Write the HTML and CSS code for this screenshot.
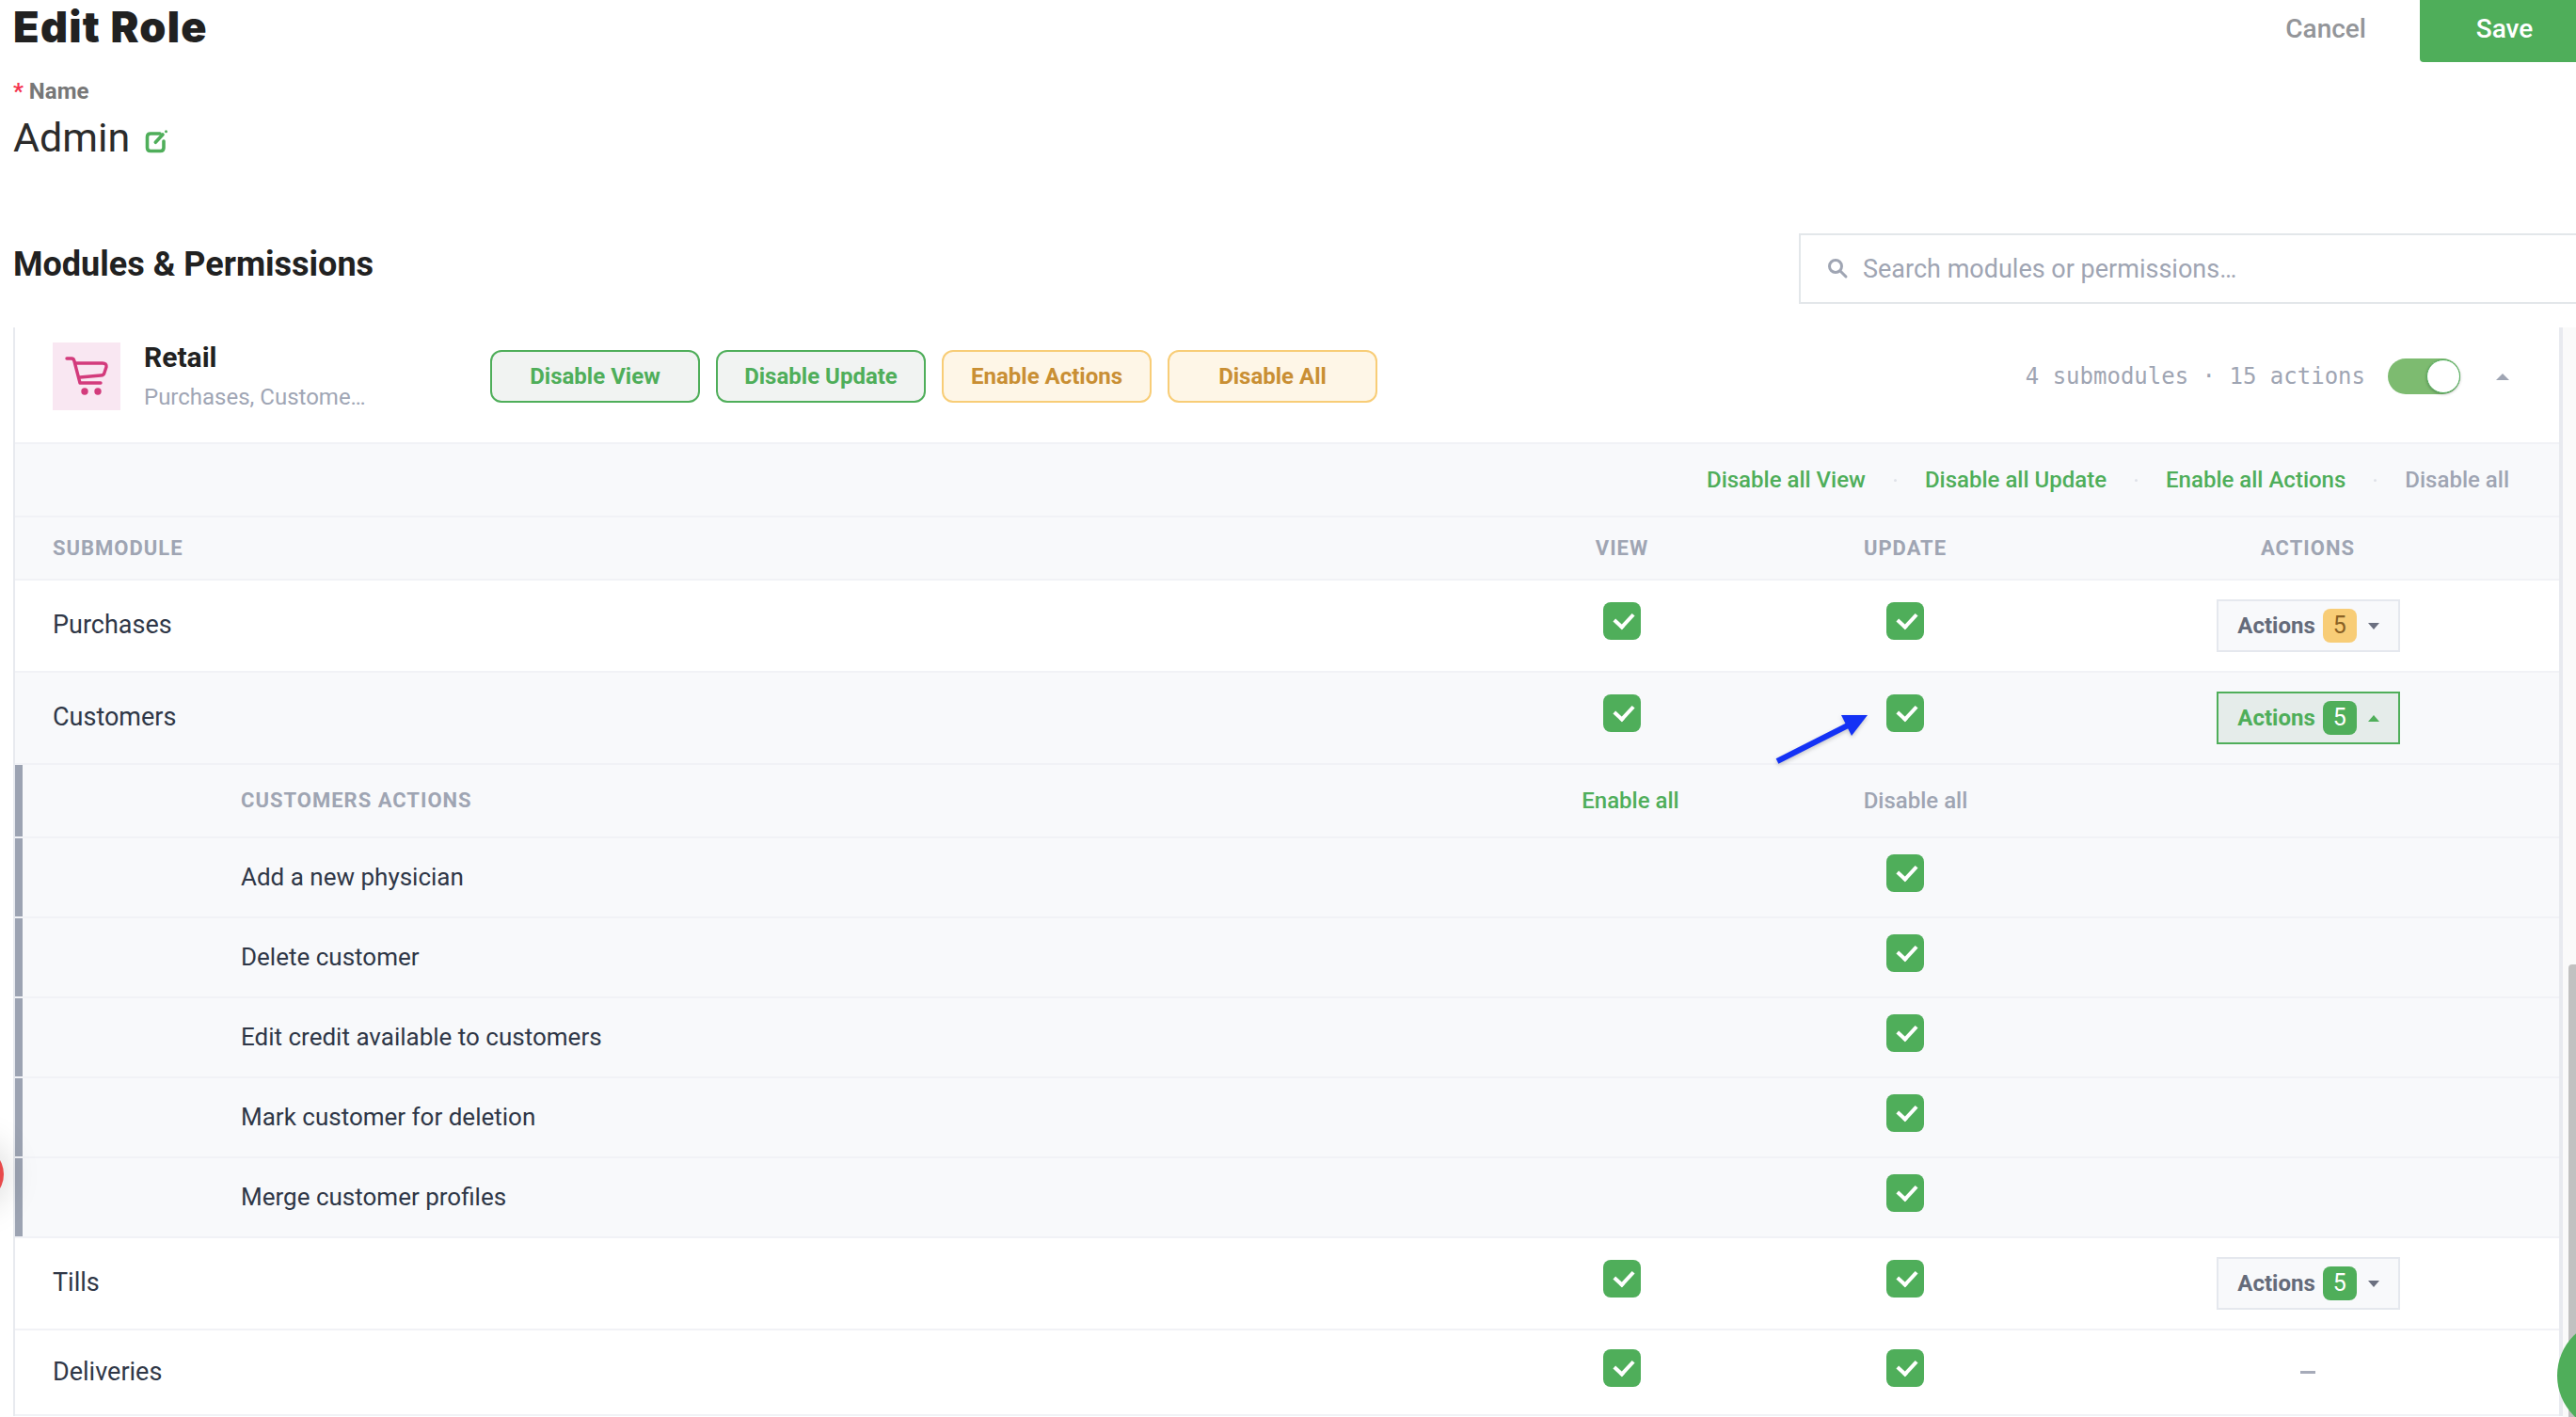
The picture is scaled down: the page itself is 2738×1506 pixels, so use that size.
FILE: index.html
```html
<!DOCTYPE html>
<html lang="en">
<head>
    <meta charset="UTF-8">
    <meta name="viewport" content="width=device-width, initial-scale=1.0">
    <title>Edit Role</title>
    <link rel="stylesheet" href="styles.css">
</head>
<body>
    <div class="topbar">
        <h1>Edit Role</h1>
        <div class="topbar-actions">
            <a href="#" class="cancel-link">Cancel</a>
            <button class="save-btn">Save</button>
        </div>
    </div>

    <div class="name-field">
        <div class="field-label"><span class="required">*</span> Name</div>
        <div class="field-value">
            Admin
            <svg class="edit-icon" viewBox="0 0 26 26" width="26" height="26" fill="none" stroke="#4fae5a" stroke-width="3.600" stroke-linecap="round">
                <path d="M16 5H6Q2.500 5 2.500 8.500V20Q2.500 23.500 6 23.500H16.500Q20 23.500 20 20V13"/>
                <path d="M11.300 14.300L19 6"/>
                <circle cx="22.500" cy="2.700" r="1.500" fill="#4fae5a" stroke="none"/>
            </svg>
        </div>
    </div>

    <div class="section-head">
        <h2>Modules &amp; Permissions</h2>
        <div class="search-box">
            <svg viewBox="0 0 24 24" width="24" height="24" fill="none" stroke="#9fa5b3" stroke-width="3" stroke-linecap="round">
                <circle cx="9" cy="9" r="6.500"/>
                <path d="M14 14L20 20"/>
            </svg>
            <span>Search modules or permissions…</span>
        </div>
    </div>

    <div class="module-panel">
        <div class="module-head">
            <div class="module-icon">
                <svg viewBox="0 0 72 72" width="72" height="72" fill="none" stroke="#d33b7c" stroke-width="3.400" stroke-linecap="round" stroke-linejoin="round">
                    <path d="M15 17H20Q22.500 17 23 20L29 43H51"/>
                    <path d="M25 22H53Q57.500 22 57 26L55 32Q54.500 35 51 35L29 37"/>
                    <circle cx="34" cy="52" r="3.700" fill="#d33b7c" stroke="none"/>
                    <circle cx="48" cy="52" r="3.700" fill="#d33b7c" stroke="none"/>
                </svg>
            </div>
            <div class="module-title">
                <div class="module-name">Retail</div>
                <div class="module-sub">Purchases, Custome…</div>
            </div>
            <div class="module-btns">
                <button class="pill pill-green">Disable View</button>
                <button class="pill pill-green">Disable Update</button>
                <button class="pill pill-amber">Enable Actions</button>
                <button class="pill pill-amber">Disable All</button>
            </div>
            <div class="module-meta">4 submodules · 15 actions</div>
            <div class="toggle"><div class="toggle-knob"></div></div>
            <div class="caret caret-up collapse-caret"></div>
        </div>

        <div class="bulk-bar">
            <a href="#" class="bulk-link">Disable all View</a>
            <span class="bulk-dot"></span>
            <a href="#" class="bulk-link">Disable all Update</a>
            <span class="bulk-dot"></span>
            <a href="#" class="bulk-link">Enable all Actions</a>
            <span class="bulk-dot"></span>
            <a href="#" class="bulk-link muted">Disable all</a>
        </div>

        <div class="row head-row">
            <div class="name-cell">Submodule</div>
            <div class="cell">View</div>
            <div class="cell">Update</div>
            <div class="cell">Actions</div>
        </div>

        <div class="row">
            <div class="name-cell">Purchases</div>
            <div class="cell"><span class="check"></span></div>
            <div class="cell"><span class="check"></span></div>
            <div class="cell">
                <button class="actions-btn">Actions <span class="count count-amber">5</span><span class="caret caret-down"></span></button>
            </div>
        </div>

        <div class="row tinted">
            <div class="name-cell">Customers</div>
            <div class="cell"><span class="check"></span></div>
            <div class="cell"><span class="check"></span></div>
            <div class="cell">
                <button class="actions-btn open">Actions <span class="count">5</span><span class="caret caret-up"></span></button>
            </div>
        </div>

        <div class="row sub-row sub-head">
            <div class="name-cell">Customers Actions</div>
            <div class="cell"><a href="#" class="bulk-link enable-all">Enable all</a></div>
            <div class="cell"><a href="#" class="bulk-link muted disable-all">Disable all</a></div>
            <div class="cell"></div>
        </div>
        <div class="row sub-row">
            <div class="name-cell">Add a new physician</div>
            <div class="cell"></div>
            <div class="cell"><span class="check"></span></div>
            <div class="cell"></div>
        </div>
        <div class="row sub-row">
            <div class="name-cell">Delete customer</div>
            <div class="cell"></div>
            <div class="cell"><span class="check"></span></div>
            <div class="cell"></div>
        </div>
        <div class="row sub-row">
            <div class="name-cell">Edit credit available to customers</div>
            <div class="cell"></div>
            <div class="cell"><span class="check"></span></div>
            <div class="cell"></div>
        </div>
        <div class="row sub-row">
            <div class="name-cell">Mark customer for deletion</div>
            <div class="cell"></div>
            <div class="cell"><span class="check"></span></div>
            <div class="cell"></div>
        </div>
        <div class="row sub-row">
            <div class="name-cell">Merge customer profiles</div>
            <div class="cell"></div>
            <div class="cell"><span class="check"></span></div>
            <div class="cell"></div>
        </div>

        <div class="row">
            <div class="name-cell">Tills</div>
            <div class="cell"><span class="check"></span></div>
            <div class="cell"><span class="check"></span></div>
            <div class="cell">
                <button class="actions-btn">Actions <span class="count">5</span><span class="caret caret-down"></span></button>
            </div>
        </div>

        <div class="row last-row">
            <div class="name-cell">Deliveries</div>
            <div class="cell"><span class="check"></span></div>
            <div class="cell"><span class="check"></span></div>
            <div class="cell"><span class="no-actions"></span></div>
        </div>
    </div>

    <!-- annotation arrow from the screenshot -->
    <svg class="note-arrow" viewBox="0 0 110 60" width="110" height="60">
        <path d="M5 55L82 16" stroke="#1432f5" stroke-width="6"/>
        <path d="M73 6H101L84 28Z" fill="#1432f5"/>
    </svg>

    <div class="scroll-track"><div class="scroll-thumb"></div></div>
    <div class="side-dot"></div>
    <div class="chat-fab"></div>
</body>
</html>
```

FILE: styles.css
```css
* {
    box-sizing: border-box;
}

html, body {
    height: 1506px;
    overflow: hidden;
}

body {
    position: relative;
    margin: 0;
    font-family: Roboto, "Liberation Sans", sans-serif;
    background-color: #fff;
    color: #2f3747;
}

/* top bar */
.topbar {
    display: flex;
    justify-content: space-between;
    height: 66px;
    padding-left: 14px;
}

.topbar h1 {
    margin: 0;
    font-family: Inter, sans-serif;
    font-size: 45px;
    font-weight: 900;
    letter-spacing: 1.3px;
    line-height: 58px;
    color: #212121;
}

.topbar-actions {
    display: flex;
    align-items: center;
}

.cancel-link {
    margin: 0 57px 6px 0;
    font-size: 28px;
    font-weight: 500;
    color: #939599;
    text-decoration: none;
}

.save-btn {
    width: 166px;
    height: 66px;
    padding: 0 0 6px 14px;
    border: none;
    border-radius: 0 0 0 4px;
    background-color: #4fae5a;
    color: #fff;
    font-family: inherit;
    font-size: 28px;
    font-weight: 500;
}

/* name */
.name-field {
    margin-top: 18px;
    padding-left: 14px;
}

.field-label {
    font-size: 24px;
    font-weight: 700;
    line-height: 26px;
    color: #777;
}

.required {
    color: #f5344f;
}

.field-value {
    display: flex;
    align-items: center;
    margin-top: 10px;
    font-size: 43px;
    font-weight: 400;
    line-height: 52px;
    color: #2b2b2b;
}

.edit-icon {
    margin: 8px 0 0 16px;
}

/* section title + search */
.section-head {
    display: flex;
    justify-content: space-between;
    align-items: flex-start;
    height: 75px;
    margin-top: 76px;
    padding-left: 14px;
}

.section-head h2 {
    margin: 11px 0 0 0;
    font-size: 36px;
    font-weight: 700;
    line-height: 44px;
    color: #212121;
}

.search-box {
    display: flex;
    align-items: center;
    gap: 14px;
    flex-shrink: 0;
    width: 826px;
    height: 75px;
    padding-left: 28px;
    border: 2px solid #e3e7ea;
    border-right: none;
    font-size: 27px;
    color: #9fa5b3;
}

/* module panel */
.module-panel {
    width: 2710px;
    margin: 25px 0 0 14px;
    border-left: 2px solid #e8eaef;
    border-right: 4px solid #e8eaef;
}

.module-head {
    display: flex;
    align-items: center;
    height: 124px;
    padding: 16px 53px 34px 40px;
    border-bottom: 2px solid #f1f2f6;
}

.module-icon {
    flex-shrink: 0;
    width: 72px;
    height: 72px;
    background-color: #f9e7f2;
}

.module-title {
    flex-shrink: 0;
    width: 393px;
    padding-left: 25px;
}

.module-name {
    font-size: 30px;
    font-weight: 700;
    line-height: 36px;
    color: #212121;
}

.module-sub {
    margin-top: 8px;
    font-size: 24px;
    line-height: 32px;
    color: #a0a6b5;
}

.module-btns {
    display: flex;
    gap: 17px;
}

.pill {
    width: 223px;
    height: 56px;
    border-radius: 12px;
    border: 2px solid;
    font-family: inherit;
    font-size: 24px;
    font-weight: 700;
}

.pill-green {
    border-color: #4fae5a;
    background-color: #f1f3f2;
    color: #4fae5a;
}

.pill-amber {
    border-color: #f8cd77;
    background-color: #fef6e7;
    color: #c98f34;
}

.module-meta {
    margin-left: auto;
    font-family: "DejaVu Sans Mono", monospace;
    font-size: 24px;
    color: #9fa5b3;
}

.toggle {
    position: relative;
    width: 77px;
    height: 38px;
    margin-left: 24px;
    border-radius: 19px;
    background-color: #7dbb70;
}

.toggle-knob {
    position: absolute;
    top: 1px;
    right: 0;
    width: 36px;
    height: 36px;
    border-radius: 50%;
    background-color: #fff;
    border: 1px solid #4fae5a;
    box-shadow: 0 1px 3px rgba(0, 0, 0, 0.25);
}

.caret {
    display: inline-block;
    width: 0;
    height: 0;
    border-left: 6px solid transparent;
    border-right: 6px solid transparent;
}

.caret-down {
    border-top: 7px solid #6b7080;
}

.caret-up {
    border-bottom: 7px solid #4fae5a;
}

.collapse-caret {
    margin-left: 38px;
    border-left-width: 7px;
    border-right-width: 7px;
    border-bottom-color: #9fa5b3;
}

/* bulk links */
.bulk-bar {
    display: flex;
    justify-content: flex-end;
    align-items: center;
    gap: 30px;
    height: 78px;
    padding-right: 53px;
    background-color: #f8f9fb;
    border-bottom: 2px solid #f1f2f6;
}

.bulk-link {
    font-size: 24px;
    font-weight: 500;
    color: #4fae5a;
    text-decoration: none;
}

.bulk-link.muted {
    color: #9fa5b3;
}

.bulk-dot {
    width: 3px;
    height: 3px;
    border-radius: 50%;
    background-color: #dfe2e8;
}

/* table rows */
.row {
    display: grid;
    grid-template-columns: 1fr 280px 322px 534px;
    align-items: center;
    height: 98px;
    border-bottom: 2px solid #f1f2f6;
    font-size: 27px;
}

.name-cell {
    padding: 0 0 3px 40px;
}

.cell {
    display: flex;
    justify-content: center;
    align-items: center;
}

.tinted {
    background-color: #f8f9fb;
}

.head-row {
    height: 67px;
    background-color: #f8f9fb;
    font-size: 22px;
    font-weight: 700;
    letter-spacing: 1px;
    text-transform: uppercase;
    color: #9fa5b3;
}

.head-row .name-cell {
    padding-bottom: 0;
}

.last-row {
    height: 91px;
}

.last-row .name-cell {
    padding-bottom: 1px;
}

.sub-row {
    height: 85px;
    background-color: #f8f9fb;
    box-shadow: inset 8px 0 0 #9ca3b2;
    font-size: 26px;
}

.sub-row .name-cell {
    padding: 0 0 1px 240px;
}

.sub-head {
    height: 78px;
}

.sub-head .name-cell {
    font-size: 22px;
    font-weight: 700;
    letter-spacing: 1px;
    text-transform: uppercase;
    color: #9fa5b3;
}

.enable-all {
    margin-left: 18px;
}

.disable-all {
    margin-left: 22px;
}

/* checkbox */
.check {
    position: relative;
    display: block;
    width: 40px;
    height: 40px;
    margin-bottom: 10px;
    border-radius: 8px;
    background-color: #4fae5a;
}

.check::after {
    content: "";
    position: absolute;
    top: 11px;
    left: 12px;
    width: 16px;
    height: 9px;
    border-left: 4px solid #fff;
    border-bottom: 4px solid #fff;
    transform: rotate(-47deg);
}

/* actions dropdown */
.actions-btn {
    display: flex;
    justify-content: center;
    align-items: center;
    width: 195px;
    height: 56px;
    margin-left: 1px;
    padding: 0;
    border: 2px solid #e5e8ee;
    background-color: #f8f9fb;
    font-family: inherit;
    font-size: 24px;
    font-weight: 700;
    color: #656b7a;
}

.actions-btn .caret {
    margin-left: 12px;
}

.actions-btn.open {
    border-color: #4fae5a;
    background-color: #e5ecea;
    color: #4fae5a;
}

.count {
    width: 36px;
    height: 36px;
    margin-left: 8px;
    border-radius: 8px;
    background-color: #4fae5a;
    color: #fff;
    font-size: 25px;
    font-weight: 400;
    line-height: 36px;
}

.count-amber {
    background-color: #f8cd77;
    color: #8a6124;
}

.no-actions {
    width: 16px;
    height: 3px;
    background-color: #a6abb9;
}

/* things that sit on top of the page */
.note-arrow {
    position: absolute;
    top: 754px;
    left: 1884px;
    filter: drop-shadow(0 2px 2px rgba(0, 0, 0, 0.2));
}

.scroll-track {
    position: absolute;
    top: 348px;
    right: 0;
    bottom: 0;
    width: 14px;
    background-color: #fafafa;
}

.scroll-thumb {
    position: absolute;
    top: 677px;
    right: 0;
    bottom: 0;
    width: 8px;
    border-radius: 4px 0 0 0;
    background-color: #c1c1c1;
}

.side-dot {
    position: absolute;
    top: 1218px;
    left: -56px;
    width: 60px;
    height: 60px;
    border-radius: 50%;
    background-color: #e8494a;
    box-shadow: 0 0 40px rgba(0, 0, 0, 0.2);
}

.chat-fab {
    position: absolute;
    top: 1402px;
    left: 2718px;
    width: 120px;
    height: 120px;
    border-radius: 50%;
    background-color: #4fae5a;
}
```
